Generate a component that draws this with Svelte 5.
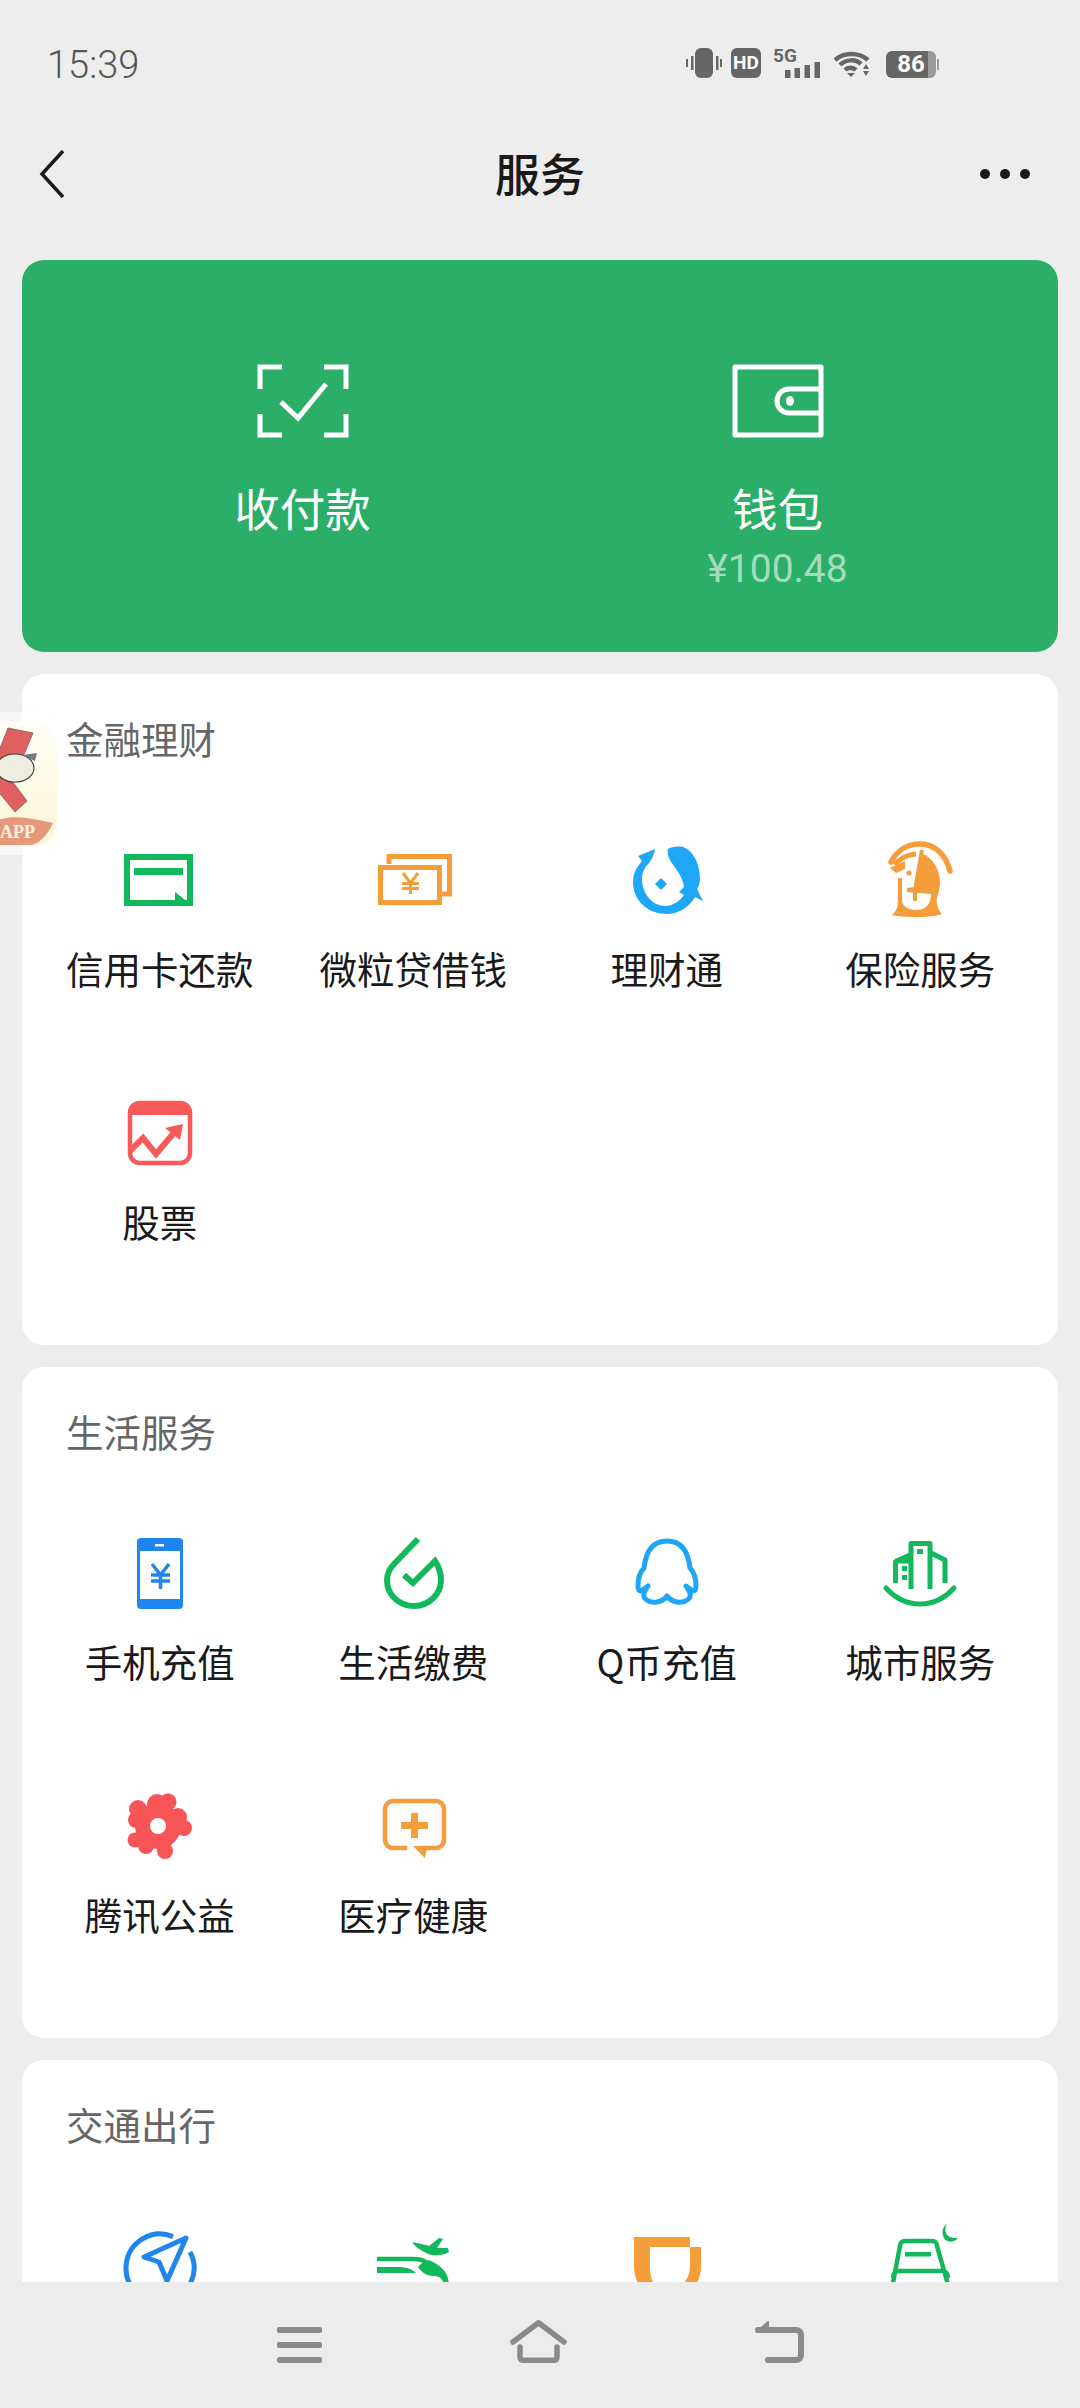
<script>
	const sections = [
		{
			title: '金融理财',
			items: [
				{ label: '信用卡还款', icon: 'card' },
				{ label: '微粒贷借钱', icon: 'cash' },
				{ label: '理财通', icon: 'fish' },
				{ label: '保险服务', icon: 'shield' },
				{ label: '股票', icon: 'stock' }
			]
		},
		{
			title: '生活服务',
			items: [
				{ label: '手机充值', icon: 'phone' },
				{ label: '生活缴费', icon: 'drop' },
				{ label: 'Q币充值', icon: 'qq' },
				{ label: '城市服务', icon: 'city' },
				{ label: '腾讯公益', icon: 'flower' },
				{ label: '医疗健康', icon: 'health' }
			]
		},
		{
			title: '交通出行',
			// labels sit below the fold in the screenshot
			items: [{ icon: 'nav' }, { icon: 'plane' }, { icon: 'didi' }, { icon: 'hotel' }]
		}
	];
</script>

{#snippet icon(name)}
	<svg class="icon" viewBox="0 0 80 80">
		{#if name === 'card'}
			<path fill="none" stroke="#12b85c" stroke-width="6" d="M7 17h63v46H7z" />
			<path fill="#12b85c" d="M14 28h49v7H14zM55 52l18 14H55z" />
		{:else if name === 'cash'}
			<path fill="none" stroke="#f59c3b" stroke-width="5" d="M16 24v-7.500h60.500V54H69M7.500 27.500h59v35h-59z" />
			<path fill="none" stroke="#f59c3b" stroke-width="3" d="M30 33l7.500 10 7.500-10M29 43.500h17M29 48.500h17M37.500 43v11" />
		{:else if name === 'fish'}
			<path fill="#1ea7f7" d="M11 16L28 9C27 15 25 19 22 23C17 28 15 33 15 39C15 54 26 66 38 66C46 66 53 61 57 55L52 52L57 47C56 36 47 27 43 20C41 16 40 13 41 9C44 7 50 6 56 7C67 11 73 25 73 39C73 43 72 46 70 49L76 61L68 57C62 68 50 74 40 74C20 74 6 60 6 42C6 33 10 27 15 21Z" />
			<path fill="#1ea7f7" d="M34 38l6 6-6 6-6-6z" />
		{:else if name === 'shield'}
			<path fill="none" stroke="#f59c3b" stroke-width="5.500" stroke-linecap="round" d="M11 22C17 10 28 4 40 4c15 0 26 11 30 27" />
			<path fill="none" stroke="#f59c3b" stroke-width="5" d="M15 25c4-6 11-10 21-11" />
			<path fill="none" stroke="#f59c3b" stroke-width="4" d="M42 10L35 50M35 50v11" />
			<path fill="#f59c3b" d="M10 28L25 21V29L16 33z" />
			<path fill="#f59c3b" d="M43 14C53 18 60 30 60 43C60 49 58 54 57 58C56 64 58 70 62 74C50 78 24 78 12 75C17 71 18 66 18 60V38H22V60C22 66 28 70 36 70C46 70 51 64 51 54L27 52V48L35 47z" />
			<circle cx="29" cy="33" r="2.500" fill="#f59c3b" />
		{:else if name === 'stock'}
			<path fill="none" stroke="#f75a58" stroke-width="4.500" d="M10 20a10 10 0 0110-10h40a10 10 0 0110 10v40a10 10 0 01-10 10H20a10 10 0 01-10-10z" />
			<path fill="#f75a58" d="M20 8h40a12 12 0 0112 12v2H8v-2A12 12 0 0120 8z" />
			<path fill="none" stroke="#f75a58" stroke-width="6" d="M10 58l13-13 13 16 17-20" />
			<path fill="#f75a58" d="M63 31l-18 4 15 12z" />
		{:else if name === 'phone'}
			<path fill="#1e86ed" fill-rule="evenodd" d="M21 5h38a4 4 0 014 4v63a4 4 0 01-4 4H21a4 4 0 01-4-4V9a4 4 0 014-4zm-1 13v48h40V18zm15-7v2.500h9V11z" />
			<path fill="none" stroke="#1e86ed" stroke-width="3.500" d="M32 31l8.500 11 8.500-11M31 42h19M31 48h19M40.500 42v14" />
		{:else if name === 'drop'}
			<path fill="none" stroke="#12b85c" stroke-width="6" d="M45 6L22 30C16 36 14 41 14 47C14 62 26 73 41 73C56 73 68 61 68 47C68 40 66 34 62 28L40 50L31 42" />
		{:else if name === 'qq'}
			<path fill="none" stroke="#1ea7f7" stroke-width="5" stroke-linejoin="round" d="M40 8c-13 0-21 9-23 27-4 4-6 10-6 18 0 3 1 5 3 5l7-5c-3 4-5 7-4 11 2 4 8 6 13 5 5-1 8-3 10-6 2 3 5 5 10 6 5 1 11-1 13-5 1-4-1-7-4-11l7 5c2 0 3-2 3-5 0-8-2-14-6-18C61 17 53 8 40 8z" />
		{:else if name === 'city'}
			<path fill="none" stroke="#12b85c" stroke-width="5" stroke-linecap="round" d="M6 55C15 65 27 71 40 71S65 65 74 55" />
			<path fill="none" stroke="#12b85c" stroke-width="5" stroke-linejoin="round" d="M15.500 50V28.500L30 22M31 56V10.500h19V56M51 20l14 7v23M15 28h16" />
			<path fill="#12b85c" d="M22 33h5v5h-5zM22 42h5v5h-5zM37 16h6v5h-6z" />
		{:else if name === 'flower'}
			<g fill="#f75457">
				<circle cx="18" cy="23" r="9" /><circle cx="16" cy="34" r="8" /><circle cx="37" cy="18" r="10" /><circle cx="48" cy="16" r="8.500" />
				<circle cx="58" cy="31" r="9" /><circle cx="64" cy="42" r="8" /><circle cx="15" cy="54" r="7.500" /><circle cx="26" cy="60" r="8" />
				<circle cx="45" cy="65" r="8" /><circle cx="38" cy="40" r="23" />
			</g>
			<circle cx="38" cy="40" r="8" fill="#fff" />
		{:else if name === 'health'}
			<path fill="none" stroke="#f59c3b" stroke-width="4.500" d="M34 62H20a8 8 0 01-8-8V23a8 8 0 018-8h43a8 8 0 018 8v31a8 8 0 01-8 8H47" />
			<path fill="#f59c3b" d="M40 60h14l-2 12zM38 27h7v9h10v7H45v9h-7v-9H28v-7h10z" />
		{:else if name === 'nav'}
			<path fill="none" stroke="#1e86ed" stroke-width="5" d="M53 10.600A34 34 0 1 0 70 26" />
			<path fill="#fff" stroke="#1e86ed" stroke-width="5" stroke-linejoin="round" d="M66 12L24 31l15 5 8 19z" />
		{:else if name === 'plane'}
			<path fill="#12b85c" d="M39 16C45 17 52 19 56 20L66 12L70 13L64 22L75 22L76 26C70 30 60 30 55 28C48 24 42 21 39 16z" />
			<path fill="none" stroke="#12b85c" stroke-width="4.500" d="M4 33H40C46 33 50 34 53 36" />
			<path fill="#12b85c" d="M4 41H26C33 41 39 43 43 47H4zM45 41C50 36 54 33 58 35C68 40 76 46 76 60H71C70 52 66 50 60 50C54 50 48 46 45 41z" />
		{:else if name === 'didi'}
			<path fill="#f59c3b" fill-rule="evenodd" d="M7 11H63V21H74V40C74 60 58 75 40 85C22 75 7 60 7 40zM23 21H63V40C63 55 52 64 40 70C28 64 23 55 23 40z" />
		{:else if name === 'hotel'}
			<path fill="none" stroke="#12b85c" stroke-width="4.500" d="M12 62L20 20C20 17 22 15 25 15H52C55 15 57 17 57 20L69 62M13 52c0-5 3-7 6-7H62c3 0 6 2 6 7" />
			<path fill="#12b85c" d="M25 26h26v4.500H25z" />
			<path fill="#12b85c" d="M67-2C63 5 66 13 78 12C74 17 67 17 64 12C61 6 63 0 67-2z" />
		{/if}
	</svg>
{/snippet}

<div class="page">
	<div class="status">
		<span class="time">15:39</span>
		<div class="sys">
			<svg width="36" height="30" viewBox="0 0 36 30">
				<rect x="9" y="0" width="18" height="30" rx="6" fill="#666" />
				<path fill="#666" d="M5 8h2.500v14H5zM0 11h2v8H0zM30 8h2.500v14H30zM34 11h2v8h-2z" />
			</svg>
			<span class="hd">HD</span>
			<div class="signal">
				<span class="five">5G</span>
				<svg width="35" height="16" viewBox="0 0 35 16"><path fill="#666" d="M0 8h5.500v8H0zM9.500 6H15v10H9.500zM19.500 3H25v13h-5.500zM29.500 0H35v16h-5.500z" /></svg>
			</div>
			<svg class="wifi" width="36" height="28" viewBox="0 0 36 28">
				<path fill="none" stroke="#666" stroke-width="4.500" d="M1 11C10 3 25 3 34 11M6 16C12 10 22 10 27 15M11 21C14 18 19 18 22 21" />
				<path fill="#666" d="M13 24h8l-4 4zM29 20l3-5 3 5zM29 22h6l-3 5z" />
			</svg>
			<div class="batt"><span>86</span></div>
		</div>
	</div>

	<div class="nav">
		<svg width="28" height="48" viewBox="0 0 28 48"><path fill="none" stroke="#1a1a1a" stroke-width="3.500" d="M25 1L4 24l21 23" /></svg>
		<h1>服务</h1>
		<div class="more"><i></i><i></i><i></i></div>
	</div>

	<div class="scroll">
		<div class="hero">
			<div class="hero-item">
				<svg width="92" height="74" viewBox="0 0 92 74" fill="none" stroke="#fff" stroke-width="5">
					<path d="M25 3H3v22M67 3h22v22M25 71H3V50M67 71h22V50" />
					<path d="M24 38l17 16 28-34" />
				</svg>
				<div class="hero-label">收付款</div>
			</div>
			<div class="hero-item">
				<svg width="92" height="74" viewBox="0 0 92 74" fill="none" stroke="#fff" stroke-width="5">
					<path stroke-linejoin="round" d="M3 3h86v68H3z" />
					<path d="M89 25H57a11.500 11.500 0 000 24h32" />
					<ellipse cx="58" cy="37" rx="4" ry="5" fill="#fff" stroke="none" />
				</svg>
				<div class="hero-label">钱包</div>
				<div class="balance">¥100.48</div>
			</div>
		</div>

		{#each sections as section}
			<section class="card">
				<h2>{section.title}</h2>
				<div class="grid">
					{#each section.items as item}
						<div class="cell">
							{@render icon(item.icon)}
							{#if item.label}
								<div class="label">{item.label}</div>
							{/if}
						</div>
					{/each}
				</div>
			</section>
		{/each}
	</div>

	<div class="bottom">
		<svg width="45" height="36" viewBox="0 0 45 36"><path fill="#8a8a8a" d="M2 0h41a2 2 0 012 2v2a2 2 0 01-2 2H2a2 2 0 01-2-2V2a2 2 0 012-2zM2 15h41a2 2 0 012 2v2a2 2 0 01-2 2H2a2 2 0 01-2-2v-2a2 2 0 012-2zM2 30h41a2 2 0 012 2v2a2 2 0 01-2 2H2a2 2 0 01-2-2v-2a2 2 0 012-2z" /></svg>
		<svg width="57" height="43" viewBox="0 0 57 43" fill="none" stroke="#8a8a8a" stroke-width="5.500" stroke-linecap="round" stroke-linejoin="round"><path d="M3 22L28.500 2.800 54 22" /><path d="M10 27v10c0 2.500 1.500 3.300 3.500 3.300h30c2 0 3.500-.8 3.500-3.300V27" /></svg>
		<svg width="49" height="42" viewBox="0 0 49 42" fill="none" stroke="#8a8a8a" stroke-width="6" stroke-linecap="round" stroke-linejoin="round"><path d="M3 9h38c3 0 5 2 5 5v20c0 3-2 5-5 5H13" /><path fill="#8a8a8a" stroke-width="2" d="M2 11L13 1v10z" /></svg>
	</div>

	<div class="floater">
		<div class="app">
			<svg viewBox="0 0 57 124" width="57" height="124">
				<path fill="#e0605f" stroke="#8b5a5a" stroke-width="0.800" d="M8 6l25 5-21 50-22-10zM-8 32l35 47-12 11-23-28z" />
				<ellipse cx="15" cy="46" rx="19" ry="14" fill="#efece0" stroke="#444" stroke-width="1.200" />
				<path fill="#777" d="M22 33l15-2-2 8z" />
				<path fill="#e8987a" d="M-2 98C15 92 35 97 53 101C48 113 38 123 30 123H-2z" />
				<text x="0" y="116" class="app-text">APP</text>
			</svg>
		</div>
	</div>
</div>

<style>
	:global(body) {
		margin: 0;
		background: #ededed;
	}
	.page {
		position: relative;
		width: 1080px;
		height: 2408px;
		display: flex;
		flex-direction: column;
		overflow: hidden;
		background: #ededed;
		font-family: 'Noto Sans CJK SC', 'Noto Sans', sans-serif;
		color: #1a1a1a;
	}
	.status {
		height: 130px;
		flex: none;
		display: flex;
		justify-content: space-between;
		align-items: center;
		padding: 0 144px 0 47px;
		box-sizing: border-box;
	}
	.time {
		font-family: Roboto, sans-serif;
		font-weight: 300;
		font-size: 38px;
		color: #555;
	}
	.sys {
		display: flex;
		align-items: center;
		height: 30px;
		margin-bottom: 4px;
	}
	.sys svg {
		display: block;
		flex: none;
	}
	.hd {
		flex: none;
		width: 30px;
		height: 30px;
		margin-left: 9px;
		background: #666;
		color: #fff;
		border-radius: 6px;
		font: 700 19px/30px Roboto, sans-serif;
		text-align: center;
	}
	.signal {
		flex: none;
		width: 47px;
		height: 29px;
		margin-left: 12px;
		display: flex;
		flex-direction: column;
		align-items: flex-end;
		color: #666;
	}
	.five {
		align-self: flex-start;
		height: 13px;
		font: 700 19px/14px Roboto, sans-serif;
	}
	.wifi {
		margin-left: 14px;
	}
	.batt {
		position: relative;
		flex: none;
		width: 50px;
		height: 27px;
		margin: 2px 0 0 16px;
		border-radius: 6px;
		background: linear-gradient(90deg, #666 84%, #9a9a9a 84%);
		color: #fff;
		font: 700 24px/27px Roboto, sans-serif;
		text-align: center;
	}
	.batt::after {
		content: '';
		position: absolute;
		left: 51px;
		top: 8px;
		width: 2px;
		height: 11px;
		background: #9a9a9a;
	}
	.nav {
		height: 88px;
		flex: none;
		display: flex;
		align-items: center;
		justify-content: space-between;
		padding: 0 50px 0 38px;
		position: relative;
	}
	.nav h1 {
		position: absolute;
		left: 0;
		right: 0;
		top: 0;
		margin: 0;
		text-align: center;
		font-size: 45px;
		line-height: 86px;
		font-weight: 500;
	}
	.more {
		display: flex;
		gap: 10px;
	}
	.more i {
		width: 10px;
		height: 10px;
		border-radius: 50%;
		background: #1a1a1a;
	}
	.scroll {
		flex: 1;
		min-height: 0;
		overflow: hidden;
		padding: 42px 22px 0;
		display: flex;
		flex-direction: column;
		gap: 22px;
	}
	.hero {
		flex: none;
		height: 392px;
		background: #2bae68;
		border-radius: 22px;
		display: grid;
		grid-template-columns: 1fr 1fr;
		padding: 0 43px;
		color: #fff;
		text-align: center;
	}
	.hero-item {
		padding-top: 104px;
	}
	.hero-item svg {
		display: block;
		margin: 0 auto;
	}
	.hero-label {
		font-size: 45.500px;
		line-height: 64px;
		margin-top: 37px;
	}
	.balance {
		font-family: Roboto, sans-serif;
		font-size: 39px;
		line-height: 44px;
		margin-top: 8px;
		color: #a4dcbc;
	}
	.card {
		flex: none;
		height: 671px;
		background: #fff;
		border-radius: 22px;
		padding: 40px 11px 0;
		box-sizing: border-box;
	}
	.card h2 {
		margin: 0 0 0 33px;
		font-size: 37.500px;
		line-height: 48px;
		font-weight: 400;
		color: #666;
	}
	.grid {
		display: grid;
		grid-template-columns: repeat(4, 1fr);
		grid-auto-rows: 253px;
		margin-top: 78px;
	}
	.cell {
		display: flex;
		flex-direction: column;
		align-items: center;
	}
	.icon {
		width: 80px;
		height: 80px;
		flex: none;
		overflow: visible;
	}
	.label {
		font-size: 37.500px;
		line-height: 50px;
		margin-top: 23px;
		white-space: nowrap;
	}
	.bottom {
		flex: none;
		height: 126px;
		background: #ececec;
		display: flex;
		justify-content: center;
		align-items: flex-end;
		gap: 188px;
		padding-bottom: 45px;
		box-sizing: border-box;
		position: relative;
	}
	.bottom svg {
		display: block;
	}
	.floater {
		position: absolute;
		left: 0;
		top: 712px;
		width: 68px;
		height: 143px;
		border-radius: 0 30px 30px 0;
		background: rgba(255, 255, 255, 0.55);
		box-shadow: 0 0 10px rgba(0, 0, 0, 0.02);
		display: flex;
		align-items: center;
	}
	.app {
		width: 57px;
		height: 124px;
		border-radius: 0 22px 22px 0;
		overflow: hidden;
		background: linear-gradient(180deg, #fffef6, #fdf7d8);
	}
	.app svg {
		display: block;
	}
	.app-text {
		font-family: 'Liberation Serif', serif;
		font-weight: 700;
		font-size: 18px;
		fill: #fff3e4;
	}
</style>
